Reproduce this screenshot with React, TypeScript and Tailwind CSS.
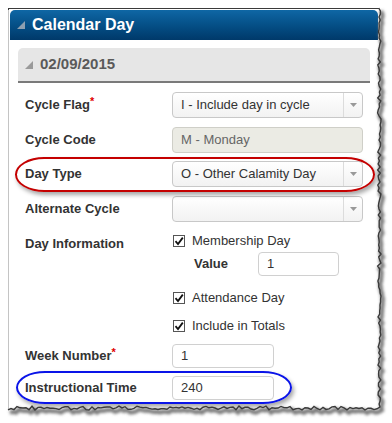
import React from 'react';

const FONT = { fontFamily: '"Liberation Sans", Arial, sans-serif' };

// small seeded noise so the torn edge looks the same every run
const rand = (seed: number) => {
  const x = Math.sin(seed * 12.9898) * 43758.5453;
  return x - Math.floor(x);
};

const buildTorn = () => {
  const pts: [number, number][] = [];
  for (let y = 8; y <= 406; y += 3) {
    pts.push([379 + (rand(y) * 3.5 - 1.5), y]);
  }
  for (let x = 380; x >= 8; x -= 3) {
    pts.push([x, 408 + (rand(x + 500) * 4 - 2)]);
  }
  return pts;
};

const TornEdge: React.FC = () => {
  const pts = buildTorn();
  const line = pts.map((p, i) => `${i ? 'L' : 'M'}${p[0].toFixed(1)},${p[1].toFixed(1)}`).join(' ');
  const fill = `${line} L8,423 L392,423 L392,0 L379,0 Z`;
  return (
    <svg className="absolute inset-0 pointer-events-none" width={392} height={423}>
      <defs>
        <filter id="blur" x="-10%" y="-10%" width="120%" height="120%">
          <feGaussianBlur stdDeviation="1.6" />
        </filter>
      </defs>
      <path d={fill} fill="#fff" />
      <path d={line} fill="none" stroke="#777" strokeWidth={4} filter="url(#blur)" transform="translate(2,3)" />
      <path d={line} fill="none" stroke="#3a3a3a" strokeWidth={1.4} />
    </svg>
  );
};

const Corner: React.FC<{ color: string }> = ({ color }) => (
  <svg width={8} height={8} viewBox="0 0 8 8">
    <polygon points="8,0 8,8 0,8" fill={color} />
  </svg>
);

const Req = () => <span className="text-[#e00000] text-[11px] align-top relative -top-[2px]">*</span>;

const Label: React.FC<{ children: React.ReactNode }> = ({ children }) => (
  <div className="w-[147px] text-[13px] font-bold text-[#333]">{children}</div>
);

const Select: React.FC<{ value?: string }> = ({ value }) => (
  <div className="flex h-[26px] w-[191px] rounded-[4px] border border-[#c8c8c8] bg-linear-to-b from-white to-[#f2f2f2]">
    <div className="flex-1 flex items-center pl-[8px] text-[13px] text-[#333]">{value}</div>
    <div className="w-[19px] flex items-center justify-center border-l border-[#dcdcdc]">
      <svg width={7} height={4} viewBox="0 0 7 4">
        <polygon points="0,0 7,0 3.5,4" fill="#999" />
      </svg>
    </div>
  </div>
);

const TextBox: React.FC<{ value: string; w: string }> = ({ value, w }) => (
  <div className={`h-[24px] ${w} rounded-[4px] border border-[#d0d0d0] bg-white flex items-center pl-[8px] text-[13px] text-[#333]`}>
    {value}
  </div>
);

const Check: React.FC<{ text: string }> = ({ text }) => (
  <div className="flex items-center h-[14px]">
    <div className="w-[12px] h-[12px] border border-[#555] bg-white flex items-center justify-center">
      <svg width={10} height={10} viewBox="0 0 10 10">
        <path d="M1.5 5.2 L4 8 L8.8 1.6" fill="none" stroke="#111" strokeWidth={1.8} />
      </svg>
    </div>
    <span className="ml-[7px] text-[13px] text-[#333]">{text}</span>
  </div>
);

const App: React.FC = () => {
  return (
    <div className="relative w-[392px] h-[423px] bg-white overflow-hidden" style={FONT}>
      <div className="pl-[8px] pt-[8px]">
        <div className="w-[372px] h-[400px] border-l border-t border-[#3a3a3a]">
          <div className="h-[400px] border-l border-[#c4c4c4] -ml-px pl-px">
            {/* Header */}
            <div className="mt-px h-[30px] w-[368px] rounded-t-[5px] bg-linear-to-b from-[#0f67a5] to-[#00396a] flex items-center pl-[7px]">
              <Corner color="#8d9fb0" />
              <span className="ml-[7px] text-[16px] font-bold text-white">Calendar Day</span>
            </div>

            {/* Section */}
            <div className="ml-[8px] mt-[8px] w-[352px] h-[35px] rounded-t-[5px] bg-[#e6e6e6] border-b-2 border-[#7a7a7a] flex items-center pl-[7px]">
              <Corner color="#9a9a9a" />
              <span className="ml-[7px] text-[15px] font-bold text-[#5a5a5a]">02/09/2015</span>
            </div>

            <div className="pl-[15px]">
              <div className="mt-[9px] flex items-center">
                <Label>Cycle Flag<Req /></Label>
                <Select value="I - Include day in cycle" />
              </div>
              <div className="mt-[9px] flex items-center">
                <Label>Cycle Code</Label>
                <div className="h-[26px] w-[191px] rounded-[4px] border border-[#cfcfc8] bg-[#ebebe4] flex items-center pl-[8px] text-[13px] text-[#666]">
                  M - Monday
                </div>
              </div>
              <div className="mt-[8px] flex items-center">
                <Label>Day Type</Label>
                <Select value="O - Other Calamity Day" />
              </div>
              <div className="mt-[9px] flex items-center">
                <Label>Alternate Cycle</Label>
                <Select />
              </div>

              <div className="mt-[12px] flex">
                <Label>Day Information</Label>
                <div className="pl-[1px]">
                  <Check text="Membership Day" />
                  <div className="mt-[4px] flex items-center">
                    <span className="ml-[21px] w-[64px] text-[13px] font-bold text-[#333]">Value</span>
                    <TextBox value="1" w="w-[81px]" />
                  </div>
                  <div className="mt-[15px]">
                    <Check text="Attendance Day" />
                  </div>
                  <div className="mt-[14px]">
                    <Check text="Include in Totals" />
                  </div>
                </div>
              </div>

              <div className="mt-[11px] flex items-center">
                <Label>Week Number<Req /></Label>
                <TextBox value="1" w="w-[102px]" />
              </div>
              <div className="mt-[8px] flex items-center">
                <Label>Instructional Time</Label>
                <TextBox value="240" w="w-[102px]" />
              </div>
            </div>
          </div>
        </div>
      </div>

      {/* annotation marks */}
      <div className="absolute left-[15px] top-[157px] w-[360px] h-[35px] rounded-[30px/18px] border-2 border-[#c40000] shadow-[2px_3px_4px_rgba(0,0,0,0.35)] pointer-events-none" />
      <div className="absolute left-[16px] top-[371px] w-[276px] h-[33px] rounded-[30px/17px] border-2 border-[#0a14e8] shadow-[2px_3px_4px_rgba(0,0,0,0.35)] pointer-events-none" />

      <TornEdge />
    </div>
  );
};

export default App;
